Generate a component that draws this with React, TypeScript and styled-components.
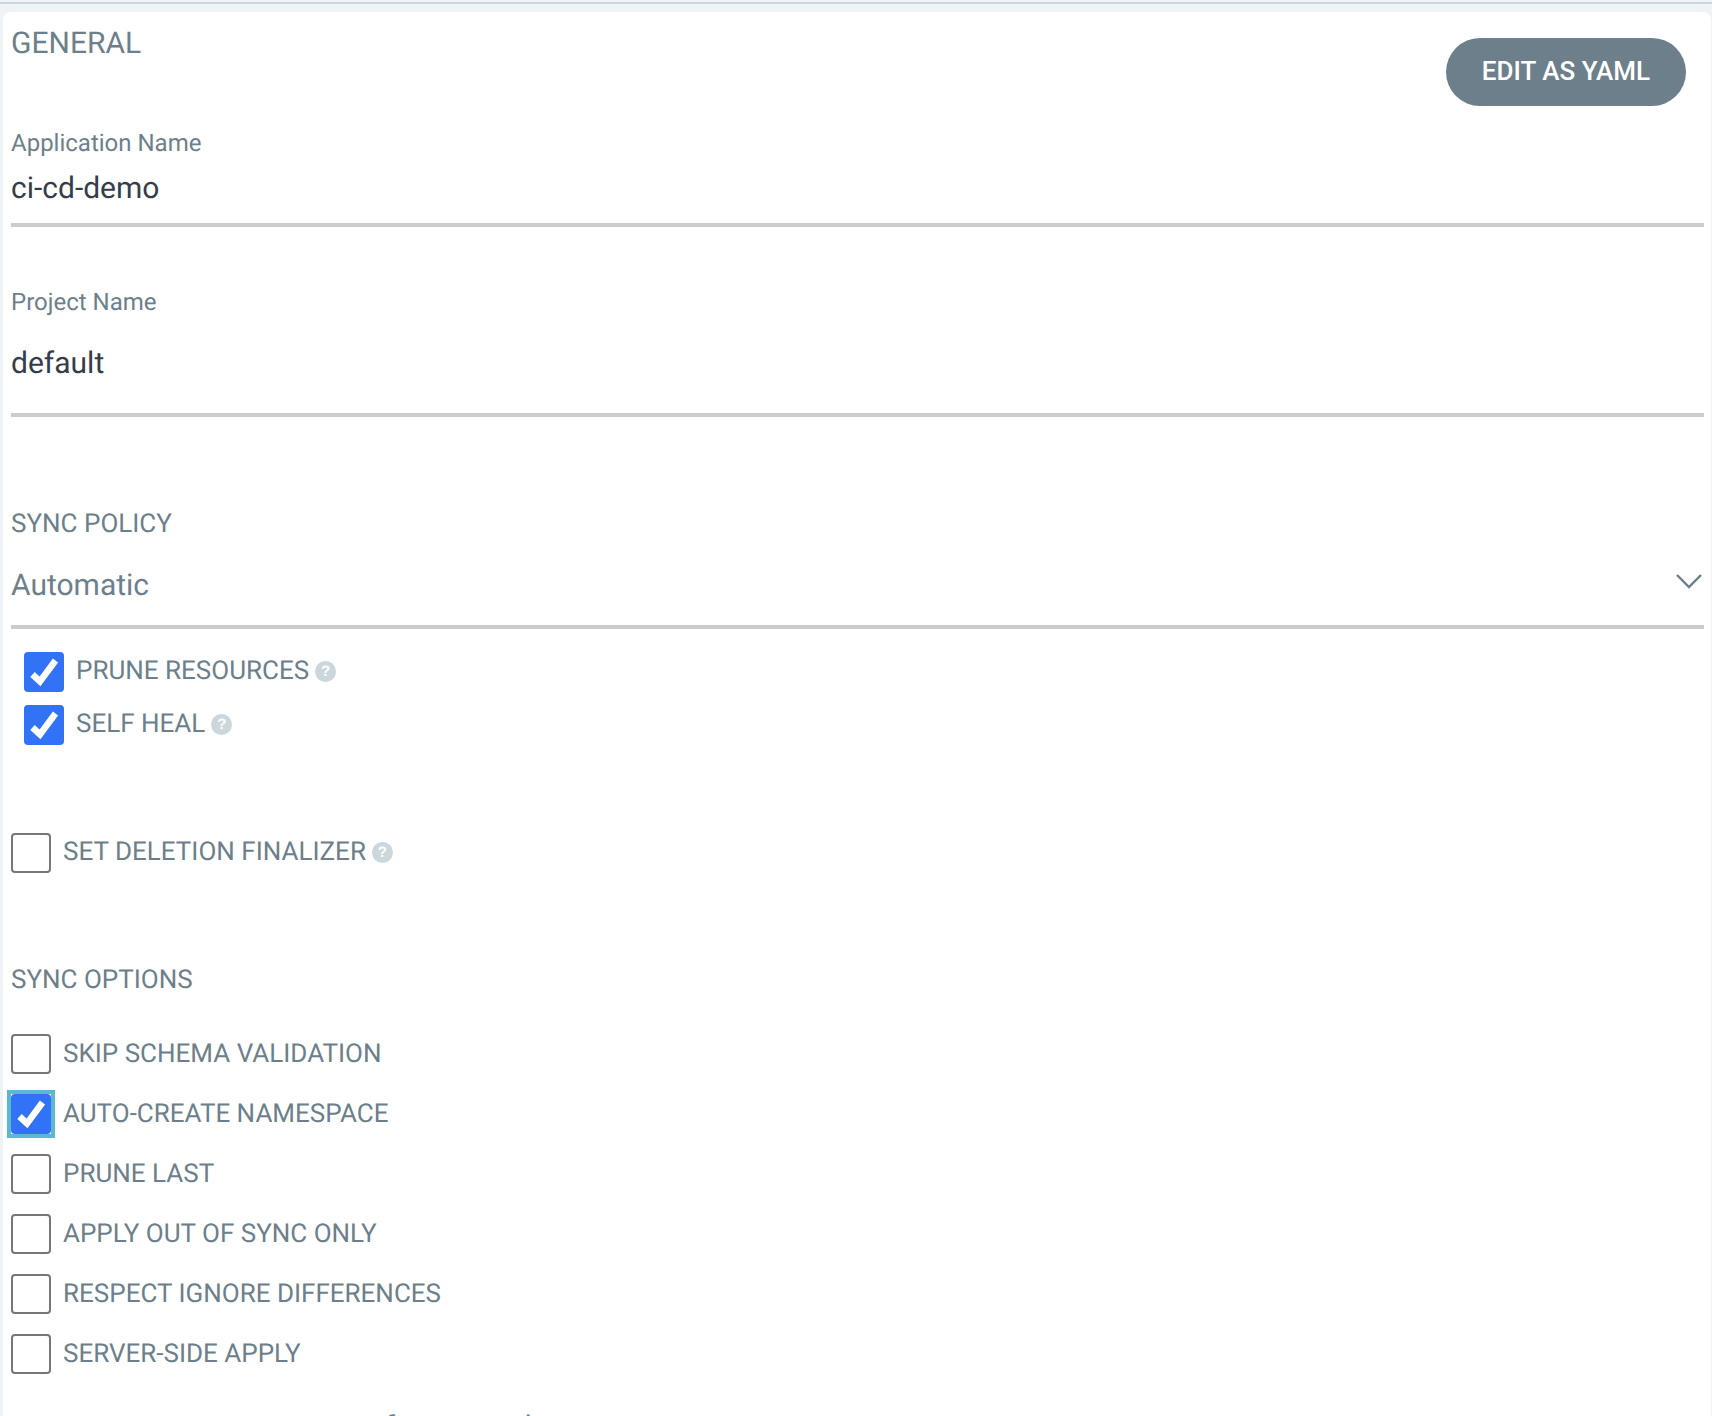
import React from "react";
import styled, { createGlobalStyle } from "styled-components";

const GlobalStyle = createGlobalStyle`
  html, body {
    margin: 0;
    padding: 0;
    background: #eff3f6;
  }
  body {
    font-family: Roboto, "Liberation Sans", sans-serif;
    text-rendering: geometricPrecision;
    overflow: hidden;
  }
`;

const Page = styled.div`
  height: 1416px;
  overflow: hidden;
  padding: 2px 1px 0 3px;
  box-sizing: border-box;
`;

const TopLine = styled.div`
  height: 2px;
  margin: 0 -1px 8px -3px;
  background: #ccd6dd;
`;

const Card = styled.div`
  background: #fff;
  border-radius: 8px 8px 0 0;
  height: 1500px;
  padding: 0 7px 0 8px;
`;

const TopRow = styled.div`
  display: flex;
  justify-content: space-between;
  align-items: flex-start;
  height: 117px;
`;

const SectionTitle = styled.div`
  color: #6d7f8b;
  font-size: 30px;
  line-height: 35px;
  padding-top: 14px;
`;

const YamlButton = styled.button`
  margin: 26px 18px 0 0;
  width: 240px;
  height: 68px;
  border: 0;
  border-radius: 34px;
  background: #6d7f8b;
  color: #fff;
  font-family: inherit;
  font-size: 26px;
  font-weight: 500;
  padding: 0 0 3px;
`;

const FieldLabel = styled.div`
  color: #6d7f8b;
  font-size: 24px;
  line-height: 28px;
`;

const Field = styled.div<{ $height: number }>`
  height: ${(p) => p.$height}px;
  border-bottom: 4px solid #ccc;
  display: flex;
  align-items: flex-end;
  justify-content: space-between;
`;

const FieldValue = styled.div<{ $pad: number; $muted?: boolean }>`
  color: ${(p) => (p.$muted ? "#6d7f8b" : "#363c4a")};
  font-size: 30px;
  line-height: 36px;
  padding-bottom: ${(p) => p.$pad}px;
`;

const FieldGap = styled.div`
  height: 61px;
`;

const Chevron = styled.svg`
  width: 26px;
  height: 16px;
  margin: 0 2px 36px 0;
`;

const GroupTitle = styled.div`
  color: #6d7f8b;
  font-size: 26px;
  line-height: 30px;
  margin-top: 92px;
  margin-bottom: -1px;
`;

const OptionGroup = styled.div<{ $top: number; $gap: number; $indent?: boolean }>`
  display: flex;
  flex-direction: column;
  margin-top: ${(p) => p.$top}px;
  gap: ${(p) => p.$gap}px;
  padding-left: ${(p) => (p.$indent ? 13 : 0)}px;
`;

const OptionRow = styled.label`
  display: flex;
  align-items: center;
  height: 40px;
`;

const Box = styled.span<{ $checked?: boolean; $focused?: boolean }>`
  position: relative;
  box-sizing: border-box;
  width: 40px;
  height: 40px;
  flex: none;
  border-radius: 4px;
  border: ${(p) => (p.$checked ? "0" : "2px solid #777")};
  background: ${(p) => (p.$checked ? "#3272f6" : "#fff")};

  &::after {
    content: "";
    display: ${(p) => (p.$focused ? "block" : "none")};
    position: absolute;
    inset: -4px;
    border: 4px solid #5ab8d0;
  }
`;

const CheckMark = styled.svg`
  display: block;
  width: 40px;
  height: 40px;
`;

const OptionText = styled.span<{ $lift: number }>`
  color: #6d7f8b;
  font-size: 26px;
  margin-left: 12px;
  padding-bottom: ${(p) => p.$lift}px;
`;

const Help = styled.span`
  width: 21px;
  height: 21px;
  margin: 0 0 2px 6px;
  border-radius: 50%;
  background: #ccd6dd;
  color: #fff;
  font-family: "Liberation Sans", sans-serif;
  font-size: 15px;
  font-weight: 700;
  line-height: 21px;
  text-align: center;
`;

const PropagationRow = styled.div`
  display: flex;
  align-items: baseline;
  gap: 10px;
  margin-top: 36px;
  line-height: 36px;
`;

const PropagationLabel = styled.span`
  color: #6d7f8b;
  font-size: 26px;
`;

const PropagationValue = styled.span`
  color: #6d7f8b;
  font-size: 30px;
`;

const Option = ({
  text,
  checked,
  focused,
  help,
  lift = 1,
}: {
  text: string;
  checked?: boolean;
  focused?: boolean;
  help?: boolean;
  lift?: number;
}) => (
  <OptionRow>
    <Box $checked={checked} $focused={focused}>
      {checked && (
        <CheckMark viewBox="0 0 40 40">
          <path d="M8.5 22.5 L16 29.5 L31.5 8.5" fill="none" stroke="#fff" strokeWidth="6.5" />
        </CheckMark>
      )}
    </Box>
    <OptionText $lift={lift}>{text}</OptionText>
    {help && <Help>?</Help>}
  </OptionRow>
);

const App = () => {
  return (
    <>
      <GlobalStyle />
      <Page>
        <TopLine />
        <Card>
          <TopRow>
            <SectionTitle>GENERAL</SectionTitle>
            <YamlButton>EDIT AS YAML</YamlButton>
          </TopRow>
          <FieldLabel>Application Name</FieldLabel>
          <Field $height={66}>
            <FieldValue $pad={16}>ci-cd-demo</FieldValue>
          </Field>
          <FieldGap />
          <FieldLabel>Project Name</FieldLabel>
          <Field $height={97}>
            <FieldValue $pad={31}>default</FieldValue>
          </Field>
          <GroupTitle>SYNC POLICY</GroupTitle>
          <Field $height={87}>
            <FieldValue $muted $pad={21}>Automatic</FieldValue>
            <Chevron viewBox="0 0 26 16">
              <path d="M1 2 L13 14 L25 2" fill="none" stroke="#6d7f8b" strokeWidth="2.4" />
            </Chevron>
          </Field>
          <OptionGroup $indent $top={23} $gap={13}>
            <Option checked help lift={3} text="PRUNE RESOURCES" />
            <Option checked help lift={3} text="SELF HEAL" />
          </OptionGroup>
          <OptionGroup $top={88} $gap={0}>
            <Option help lift={2} text="SET DELETION FINALIZER" />
          </OptionGroup>
          <GroupTitle>SYNC OPTIONS</GroupTitle>
          <OptionGroup $top={40} $gap={20}>
            <Option text="SKIP SCHEMA VALIDATION" />
            <Option checked focused text="AUTO-CREATE NAMESPACE" />
            <Option text="PRUNE LAST" />
            <Option text="APPLY OUT OF SYNC ONLY" />
            <Option text="RESPECT IGNORE DIFFERENCES" />
            <Option text="SERVER-SIDE APPLY" />
          </OptionGroup>
          <PropagationRow>
            <PropagationLabel>PRUNE PROPAGATION POLICY:</PropagationLabel>
            <PropagationValue>foreground</PropagationValue>
          </PropagationRow>
        </Card>
      </Page>
    </>
  );
};

export default App;
